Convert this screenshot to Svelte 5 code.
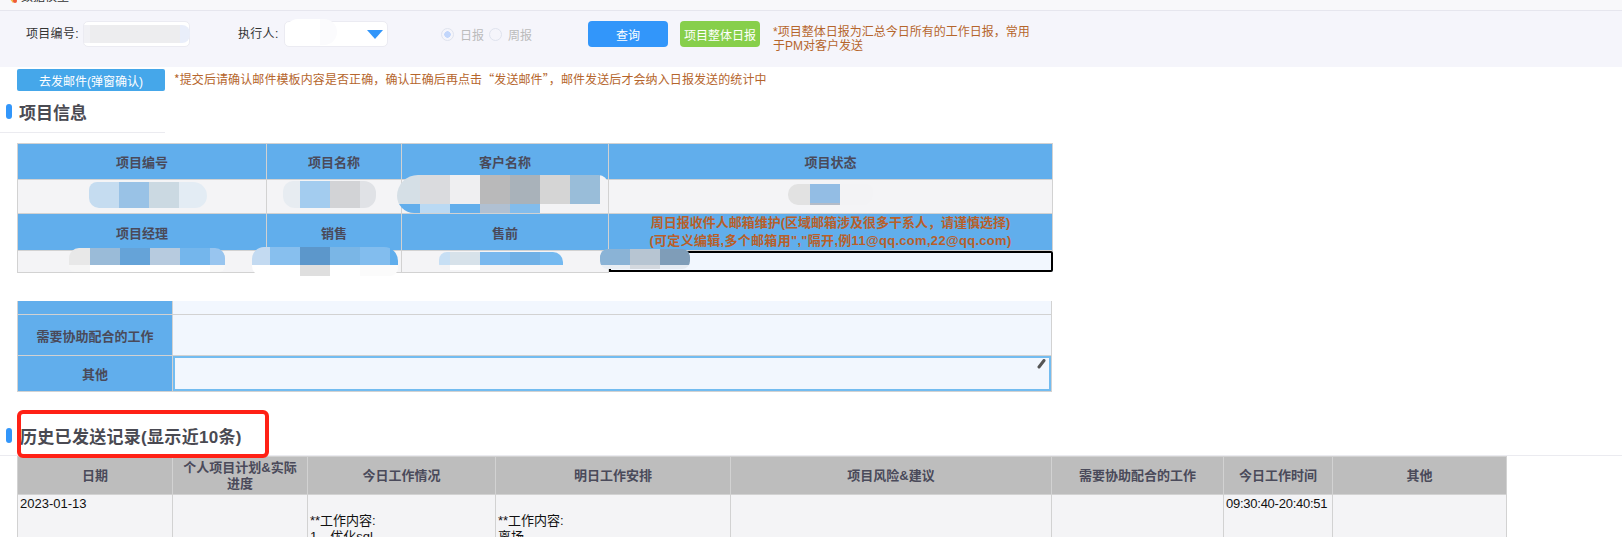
<script>
  // mosaic patches that cover private values in the screenshot
  const patches = [
    { x: 84, y: 25, w: 6, h: 18, radius: '0', tiles: [[6, '#f1f1f5']] },
    { x: 90, y: 25, w: 100, h: 18, radius: '0 8px 8px 0', tiles: [[90, '#ededef'], [10, '#e9eefa']] },
    { x: 285, y: 19, w: 52, h: 26, radius: '14px', tiles: [[35, '#ffffff'], [17, '#fbfbfd']] },
    { x: 89, y: 182, w: 118, h: 26, radius: '8px 14px 12px 10px', tiles: [[30, '#c5dcf0'], [30, '#99c2e6'], [30, '#cbd9e2'], [28, '#e3ecf4']] },
    { x: 283, y: 181, w: 93, h: 27, radius: '10px 12px 12px 12px', split: 90, tiles: [[17, '#e7ecf1'], [30, '#a3ccef'], [30, '#d2d3d6'], [16, '#e0e2e6']] },
    { x: 397, y: 175, w: 211, h: 38, radius: '22px 10px 8px 18px', split: 76, tiles: [[23, '#d5dfe6', '#62aeec'], [30, '#dadbde', '#bad9f3'], [30, '#efeff1', '#62aeec'], [30, '#b9b9ba', '#b0c0d2'], [30, '#a9b2ba', '#82bcec'], [30, '#d5d5d5', '#f3f3f5'], [30, '#99bdd9', '#f3f3f5'], [8, '#f3f3f5']] },
    { x: 788, y: 184, w: 85, h: 21, radius: '10px 6px 10px 10px', split: 90, tiles: [[22, '#e2e2e2'], [30, '#93bde4', '#b4bcc8'], [33, '#f3f3f5']] },
    { x: 69, y: 248, w: 156, h: 24, radius: '10px 10px 6px 6px', split: 72, tiles: [[21, '#e8e8e8', '#f6f6f6'], [30, '#9abbd8', '#ffffff'], [30, '#65a3d8', '#ffffff'], [30, '#b7cbdf', '#ffffff'], [30, '#74b6ec', '#ffffff'], [15, '#98c5ef', '#f8f8f8']] },
    { x: 252, y: 247, w: 146, h: 29, radius: '12px 14px 8px 10px', split: 62, tiles: [[18, '#c3daf1', '#ffffff'], [30, '#87bfee', '#ffffff'], [30, '#5c97cb', '#dfdfdf'], [30, '#7ab6e6', '#ffffff'], [30, '#82bdee', '#fbfbfb'], [8, '#5fadec', '#fbfbfb']] },
    { x: 439, y: 252, w: 124, h: 18, radius: '8px 10px 4px 6px', split: 72, tiles: [[11, '#c7dff4', '#f3f3f5'], [30, '#d7e2ea', '#ffffff'], [30, '#79b8ee', '#f3f3f5'], [30, '#6fb0e6', '#f3f3f5'], [23, '#74b9f0', '#f3f3f5']] },
    { x: 600, y: 249, w: 90, h: 20, radius: '8px', split: 80, tiles: [[30, '#8ab3d6', '#e9eef4'], [30, '#b7c5d2', '#d4d9df'], [30, '#7f9db8', '#e5ebf2']] }
  ];

  function tileBg(tile, split) {
    if (!tile[2]) return tile[1];
    return `linear-gradient(${tile[1]} ${split}%, ${tile[2]} ${split}%)`;
  }

  const historyHead = ['日期', '个人项目计划&实际进度', '今日工作情况', '明日工作安排', '项目风险&建议', '需要协助配合的工作', '今日工作时间', '其他'];
</script>

<div class="page">
  <div class="tab">
    <svg class="tab-icon" width="9" height="6" viewBox="0 0 9 6">
      <path d="M0 0h7L4 5z" fill="#f5b944" />
      <circle cx="6" cy="3" r="2" fill="#ef5a38" />
    </svg>
    <span>数据模型</span>
  </div>

  <div class="filter">
    <label class="lbl lbl-code" for="code">项目编号:</label>
    <input id="code" class="field field-code" />
    <label class="lbl lbl-owner" for="owner">执行人:</label>
    <div id="owner" class="field field-owner">
      <svg width="16" height="9" viewBox="0 0 16 9"><path d="M0 0h16L8 9z" fill="#3296fa" /></svg>
    </div>
    <div class="radios">
      <span class="radio on"></span><span>日报</span>
      <span class="radio second"></span><span>周报</span>
    </div>
    <button class="btn btn-query">查询</button>
    <button class="btn btn-green">项目整体日报</button>
    <p class="hint">*项目整体日报为汇总今日所有的工作日报，常用于PM对客户发送</p>
  </div>

  <div class="mail-row">
    <button class="btn-mail">去发邮件(弹窗确认)</button>
    <span class="note">*提交后请确认邮件模板内容是否正确，确认正确后再点击“发送邮件”，邮件发送后才会纳入日报发送的统计中</span>
  </div>

  <div class="section first">
    <i class="mark"></i><h2>项目信息</h2>
  </div>

  <table class="info">
    <colgroup><col style="width:249px" /><col style="width:135px" /><col style="width:207px" /><col style="width:444px" /></colgroup>
    <tbody>
      <tr class="r-head"><th>项目编号</th><th>项目名称</th><th>客户名称</th><th>项目状态</th></tr>
      <tr class="r-data"><td></td><td></td><td></td><td></td></tr>
      <tr class="r-head"><th>项目经理</th><th>销售</th><th>售前</th>
        <th class="warn">周日报收件人邮箱维护(区域邮箱涉及很多干系人，请谨慎选择)<br /><span>(可定义编辑,多个邮箱用","隔开,例11@qq.com,22@qq.com)</span></th></tr>
      <tr class="r-low"><td></td><td></td><td></td><td class="mail-cell"><div class="mail-input"></div></td></tr>
    </tbody>
  </table>

  <table class="daily">
    <colgroup><col style="width:155px" /><col /></colgroup>
    <tbody>
      <tr class="r-cut"><th></th><td></td></tr>
      <tr class="r-help"><th>需要协助配合的工作</th><td></td></tr>
      <tr class="r-other"><th>其他</th><td>
        <div class="other-input">
          <svg width="9" height="10" viewBox="0 0 9 10"><path d="M7 1.5 2 8" stroke="#555" stroke-width="3" stroke-linecap="round" fill="none" /></svg>
        </div>
      </td></tr>
    </tbody>
  </table>

  <div class="section second">
    <i class="mark"></i><h2>历史已发送记录(显示近10条)</h2>
    <div class="callout"></div>
  </div>

  <table class="history">
    <colgroup>
      <col style="width:155px" /><col style="width:135px" /><col style="width:188px" /><col style="width:235px" />
      <col style="width:321px" /><col style="width:172px" /><col style="width:109px" /><col style="width:174px" />
    </colgroup>
    <thead>
      <tr>{#each historyHead as title}<th>{title}</th>{/each}</tr>
    </thead>
    <tbody>
      <tr>
        <td>2023-01-13</td>
        <td></td>
        <td><div class="gap"></div>**工作内容:<br />1、优化sql</td>
        <td><div class="gap"></div>**工作内容:<br />离场</td>
        <td></td>
        <td></td>
        <td class="time">09:30:40-20:40:51</td>
        <td></td>
      </tr>
    </tbody>
  </table>

  {#each patches as p}
    <div class="patch" style="left:{p.x}px;top:{p.y}px;width:{p.w}px;height:{p.h}px;border-radius:{p.radius}">
      {#each p.tiles as tile}
        <span style="width:{tile[0]}px;background:{tileBg(tile, p.split)}"></span>
      {/each}
    </div>
  {/each}
</div>

<style>
  :global(html), :global(body) {
    margin: 0;
    background: #fff;
    overflow: hidden;
  }

  .page {
    position: relative;
    width: 1622px;
    height: 537px;
    overflow: hidden;
    background: #fff;
    font-family: "Liberation Sans", "Noto Sans CJK SC", sans-serif;
    font-size: 12px;
    color: #333;
  }

  .tab {
    height: 10px;
    overflow: hidden;
    display: flex;
    align-items: flex-end;
    background: #f8f8fa;
    border-bottom: 1px solid #e6e6ee;
    padding-left: 9px;
    gap: 3px;
  }

  .tab-icon {
    flex: none;
    margin-bottom: 6px;
  }

  .tab span {
    font-size: 12px;
    line-height: 12px;
    margin-bottom: 7px;
    color: #333;
  }

  .filter {
    height: 56px;
    background: #f5f5fb;
    display: flex;
    align-items: flex-start;
    padding: 10px 0 0 26px;
    box-sizing: border-box;
  }

  .lbl {
    line-height: 26px;
    white-space: nowrap;
    letter-spacing: 0.3px;
  }

  .lbl-code { width: 57px; }

  .lbl-owner {
    width: 46px;
    margin-left: 48px;
  }

  .field {
    box-sizing: border-box;
    height: 26px;
    margin: 0;
    padding: 0;
    background: #fff;
    border: 1px solid #ebebf2;
    border-radius: 5px;
  }

  .field-code { width: 107px; }

  .field-owner {
    width: 104px;
    display: flex;
    align-items: center;
    justify-content: flex-end;
    padding-right: 4px;
  }

  .radios {
    display: flex;
    align-items: center;
    height: 26px;
    margin-left: 53px;
    color: #bbb;
    width: 147px;
  }

  .radio {
    box-sizing: border-box;
    width: 13px;
    height: 13px;
    margin-right: 6px;
    border: 1px solid #dfe3ee;
    border-radius: 50%;
    background: #f5f5fb;
  }

  .radio.on {
    background: radial-gradient(circle, #c2d6fb 0 3px, #f5f5fb 3.5px);
  }

  .radio.second { margin-left: 5px; }

  .btn {
    flex: none;
    width: 80px;
    height: 26px;
    margin: 0 12px 0 0;
    padding: 0;
    border: 0;
    border-radius: 4px;
    color: #fff;
    font: inherit;
    white-space: nowrap;
  }

  .btn-query { background: #3296fa; }
  .btn-green { background: #87cf4b; margin-right: 13px; }

  .hint {
    margin: 4px 0 0;
    width: 260px;
    line-height: 14px;
    color: #b5652c;
  }

  .mail-row {
    display: flex;
    align-items: center;
    gap: 9px;
    height: 22px;
    margin-top: 2px;
    padding-left: 17px;
  }

  .btn-mail {
    width: 148px;
    height: 22px;
    padding: 0;
    border: 0;
    border-radius: 2px;
    background: #45a7ea;
    color: #fff;
    font: inherit;
  }

  .note {
    color: #b5652c;
    font-family: "Noto Sans CJK SC", sans-serif;
    letter-spacing: 0.1px;
    margin-top: -3px;
  }

  .section {
    position: relative;
    display: flex;
    align-items: center;
  }

  .section h2 {
    margin: 0;
    font-size: 17px;
    font-weight: bold;
    color: #4a4a52;
    white-space: nowrap;
  }

  .section.first {
    height: 41px;
    width: 165px;
    border-bottom: 1px solid #ebebf0;
    margin-bottom: 10px;
  }

  .section.first h2 { margin-left: 7px; }

  .section.second {
    height: 63px;
    border-bottom: 1px solid #ebebf0;
  }

  .section.second h2 {
    margin-left: 8px;
    margin-top: 24px;
    letter-spacing: 0.3px;
  }

  .section.second .mark { margin-top: 24px; }

  .mark {
    flex: none;
    width: 6px;
    height: 15px;
    margin-left: 6px;
    border-radius: 3px;
    background: #3296fa;
  }

  .callout {
    position: absolute;
    left: 17px;
    top: 18px;
    width: 252px;
    height: 48px;
    box-sizing: border-box;
    border: 4px solid #ff2116;
    border-radius: 6px;
    z-index: 2;
  }

  table {
    border-collapse: collapse;
    table-layout: fixed;
    margin-left: 17px;
  }

  th, td {
    box-sizing: border-box;
    padding: 0;
    border: 1px solid #d2d2d2;
    font-size: 13px;
  }

  th {
    font-weight: bold;
    color: #4a4a5a;
    text-align: center;
  }

  .info { width: 1035px; }
  .info th { background: #61aeec; }
  .info td { background: #f4f4f6; }
  .r-head { height: 36px; }
  .r-data { height: 34px; }
  .r-low { height: 21px; }

  .warn {
    color: #b85f2a;
    line-height: 18px;
    white-space: nowrap;
  }

  .warn span { letter-spacing: 0.3px; }

  .info .mail-cell {
    border: 0;
    background: #f2f7fe;
  }

  .mail-input {
    box-sizing: border-box;
    height: 21px;
    border: 2px solid #000;
    border-radius: 0 2px 2px 0;
    background: #f2f7fe;
  }

  .daily {
    width: 1035px;
    margin-top: 28px;
  }

  .daily th { background: #61aeec; }
  .daily td { background: #f2f7fe; }
  .daily .r-cut th, .daily .r-cut td { border-top: 0; }
  .r-cut { height: 14px; }
  .r-help { height: 41px; }
  .r-other { height: 35px; }

  .other-input {
    position: relative;
    box-sizing: border-box;
    height: 35px;
    border: 2px solid #73bcf0;
    background: #f2f7fe;
    display: flex;
    justify-content: flex-end;
    align-items: flex-start;
    padding: 1px 3px 0 0;
  }

  .history { width: 1489px; }

  .history th {
    height: 38px;
    padding: 0 8px;
    background: #bdbdbd;
    line-height: 16px;
  }

  .history td {
    background: #f4f4f6;
    vertical-align: top;
    color: #111;
    padding: 1px 2px 0;
    line-height: 16px;
    white-space: nowrap;
    height: 200px;
  }

  .history .time { letter-spacing: -0.25px; }

  .gap { height: 17px; }

  .patch {
    position: absolute;
    display: flex;
    overflow: hidden;
    z-index: 1;
  }

  .patch span {
    flex: none;
    height: 100%;
  }
</style>
